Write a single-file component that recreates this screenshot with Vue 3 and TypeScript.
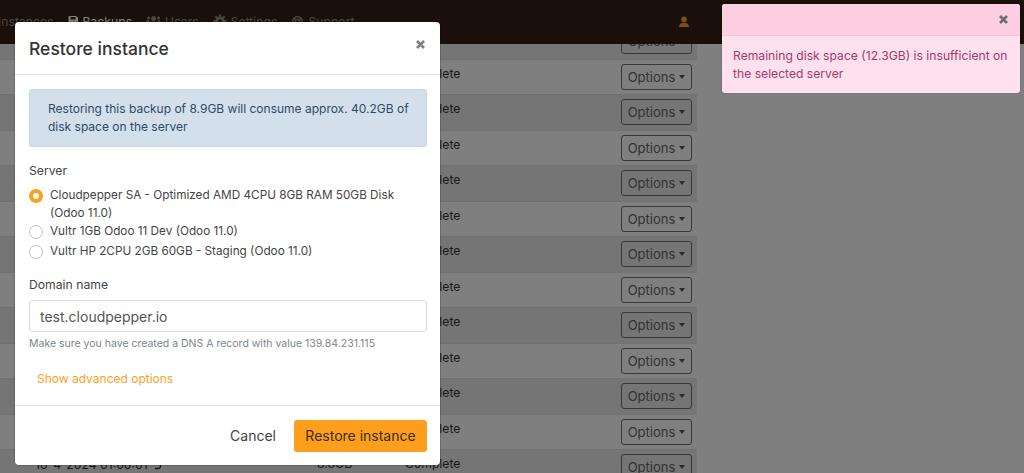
<script setup lang="ts">
import { ref } from 'vue'

const domain = ref('test.cloudpepper.io')
const server = ref('sa')

const servers = [
  { id: 'sa', label: 'Cloudpepper SA - Optimized AMD 4CPU 8GB RAM 50GB Disk (Odoo 11.0)' },
  { id: 'dev', label: 'Vultr 1GB Odoo 11 Dev (Odoo 11.0)' },
  { id: 'hp', label: 'Vultr HP 2CPU 2GB 60GB - Staging (Odoo 11.0)' }
]

const rows = Array.from({ length: 13 }, (_, i) => ({
  id: i,
  date: '10-4-2024 01:00:01',
  size: '8.8GB',
  status: 'Complete'
}))
</script>

<template>
  <div class="page">
    <nav class="navbar">
      <a class="nav-link">Instances</a>
      <a class="nav-link active">
        <svg width="11" height="12" viewBox="0 0 11 12">
          <path d="M1.500 1h6.500l2 2v7a1 1 0 0 1-1 1h-7.500a1 1 0 0 1-1-1v-8a1 1 0 0 1 1-1z" fill="currentColor" />
          <rect x="2.500" y="2" width="5" height="2.500" fill="#341e14" />
          <circle cx="5.500" cy="8" r="1.500" fill="#341e14" />
        </svg>
        Backups
      </a>
      <a class="nav-link">
        <svg width="15" height="12" viewBox="0 0 15 12">
          <g fill="currentColor">
            <circle cx="7.500" cy="3.500" r="2.500" />
            <path d="M3.500 11c0-3 1.500-4.500 4-4.500s4 1.500 4 4.500z" />
            <circle cx="2.500" cy="3" r="1.500" />
            <circle cx="12.500" cy="3" r="1.500" />
            <path d="M0 8c0-2 1-3 2.500-3l1 .5-1 2.500z" />
            <path d="M15 8c0-2-1-3-2.500-3l-1 .5 1 2.500z" />
          </g>
        </svg>
        Users
      </a>
      <a class="nav-link">
        <svg width="14" height="14" viewBox="0 0 14 14">
          <path d="M7 0.500v13M0.500 7h13M2.400 2.400l9.200 9.200M11.600 2.400l-9.200 9.200" stroke="currentColor" stroke-width="2" />
          <circle cx="7" cy="7" r="4.500" fill="currentColor" />
          <circle cx="7" cy="7" r="1.800" fill="#341e14" />
        </svg>
        Settings
      </a>
      <a class="nav-link">
        <svg width="13" height="13" viewBox="0 0 13 13">
          <circle cx="6.500" cy="6.500" r="4.800" fill="none" stroke="currentColor" stroke-width="1.500" />
          <circle cx="6.500" cy="6.500" r="2.200" fill="none" stroke="currentColor" stroke-width="1.300" />
          <path d="M3 3l2 2M10 3l-2 2M3 10l2-2M10 10l-2-2" stroke="currentColor" stroke-width="1.500" />
        </svg>
        Support
      </a>
      <svg class="user" width="12" height="12" viewBox="0 0 12 12">
        <circle cx="6" cy="3.400" r="2.800" fill="#fd9f1c" />
        <path d="M1 11c0-3 2-4.200 5-4.200s5 1.200 5 4.200z" fill="#fd9f1c" />
      </svg>
    </nav>
    <div class="content">
      <div class="table">
        <div v-for="row in rows" :key="row.id" class="row">
          <span class="date">
            {{ row.date }}
            <svg width="9" height="11" viewBox="0 0 9 11">
              <path d="M1 1.500h5a2.500 3 0 0 1 1.500 2.500v3a2.500 2.500 0 0 1-2.500 2.500h-3" fill="none" stroke="#333" stroke-width="1.300" />
            </svg>
          </span>
          <span class="size">{{ row.size }}</span>
          <span class="status">{{ row.status }}</span>
          <button class="options">Options<i class="caret"></i></button>
        </div>
      </div>
    </div>

    <div class="backdrop"></div>

    <div class="modal">
      <header class="modal-header">
        <h2>Restore instance</h2>
        <svg class="close" width="9" height="9" viewBox="0 0 9 9"><path d="M1 1l7 7M8 1l-7 7" /></svg>
      </header>
      <div class="modal-body">
        <div class="alert">Restoring this backup of 8.9GB will consume approx. 40.2GB of disk space on the server</div>
        <div class="label">Server</div>
        <label v-for="s in servers" :key="s.id" class="radio">
          <span class="dot" :class="{ on: server === s.id }"></span>
          <span>{{ s.label }}</span>
        </label>
        <div class="label domain">Domain name</div>
        <input v-model="domain" class="input" />
        <div class="help">Make sure you have created a DNS A record with value 139.84.231.115</div>
        <a class="advanced">Show advanced options</a>
      </div>
      <footer class="modal-footer">
        <button class="cancel">Cancel</button>
        <button class="restore">Restore instance</button>
      </footer>
    </div>

    <div class="toast">
      <div class="toast-head">
        <svg class="close dark" width="9" height="9" viewBox="0 0 9 9"><path d="M1 1l7 7M8 1l-7 7" /></svg>
      </div>
      <div class="toast-body">Remaining disk space (12.3GB) is insufficient on the selected server</div>
    </div>
  </div>
</template>

<style>
html, body { margin: 0; background: #fff; }
</style>

<style scoped>
.page {
  position: relative;
  width: 1024px;
  height: 473px;
  overflow: hidden;
  font-family: Inter, "Noto Sans", sans-serif;
  font-size: 12.2px;
  color: #333;
  background: #fff;
}
.navbar {
  height: 44px;
  background: #341e14;
  display: flex;
  align-items: flex-start;
  gap: 14px;
  padding: 13px 0 0 0;
  box-sizing: border-box;
  color: #8f8f8f;
  position: relative;
  z-index: 1;
}
.nav-link { display: inline-flex; align-items: center; gap: 4px; height: 16px; }
.nav-link:first-child { margin-left: -2px; }
.nav-link.active { color: #fff; }
.user { position: absolute; left: 678px; top: 16px; }
.content { height: 429px; overflow: hidden; }
.table { width: 697px; margin-top: -20px; }
.row {
  height: 35.5px;
  box-sizing: border-box;
  border-bottom: 1px solid #e2e2e2;
  display: flex;
  align-items: flex-start;
}
.row:nth-child(odd) { background: #eaeaea; }
.date {
  width: 317px;
  padding: 6px 0 0 35px;
  box-sizing: border-box;
  display: inline-flex;
  align-items: center;
  gap: 5px;
  height: 22px;
}
.size { width: 88px; padding-top: 6px; }
.status { width: 216px; padding-top: 6px; }
.options {
  width: 71px;
  height: 26px;
  margin-top: 4px;
  padding: 0;
  border: 1px solid #707070;
  border-radius: 3px;
  background: transparent;
  font: inherit;
  font-size: 13px;
  color: #666;
  display: inline-flex;
  align-items: center;
  justify-content: center;
  gap: 4px;
}
.caret {
  width: 0;
  height: 0;
  border: 3px solid transparent;
  border-top: 4px solid #555;
  border-bottom: 0;
}
.backdrop { position: absolute; inset: 0; background: rgba(0, 0, 0, 0.5); z-index: 2; }
.modal {
  position: absolute;
  left: 15px;
  top: 22px;
  width: 425px;
  height: 443px;
  background: #fff;
  border-radius: 4px;
  box-shadow: 0 0 0 1px rgba(0, 0, 0, 0.15);
  z-index: 3;
  display: flex;
  flex-direction: column;
}
.modal-header {
  height: 53px;
  box-sizing: border-box;
  border-bottom: 1px solid #e6e9ec;
  padding: 0 15px 0 14px;
  display: flex;
  align-items: center;
  justify-content: space-between;
}
.modal-header h2 { margin: 0; font-size: 17.500px; font-weight: 500; color: #333; }
.close { fill: none; stroke: #808080; stroke-width: 2.700; margin-top: -7px; }
.modal-body { flex: 1; padding: 14px 13px 0 14px; }
.alert {
  height: 58px;
  box-sizing: border-box;
  padding: 10px 14px 10px 18px;
  background: #d3e0ec;
  border: 1px solid #c6d7e6;
  border-radius: 3px;
  line-height: 18px;
  font-size: 12px;
  color: #2f4a66;
}
.label { margin-top: 15px; margin-bottom: 6px; line-height: 18px; color: #444; }
.radio { display: flex; gap: 7px; line-height: 18px; color: #444; font-size: 11.750px; }
.radio:last-of-type { margin-top: 2px; }
.dot {
  flex: none;
  box-sizing: border-box;
  width: 14px;
  height: 14px;
  margin-top: 3px;
  border-radius: 50%;
  border: 1px solid #b5bec6;
  background: #fff;
}
.dot.on { border: 4px solid #fd9f1c; }
.domain { margin-top: 16px; margin-bottom: 6px; }
.input {
  display: block;
  width: 398px;
  height: 32px;
  box-sizing: border-box;
  padding: 0 10px;
  border: 1px solid #d5dadf;
  border-radius: 3px;
  font: inherit;
  font-size: 14px;
  color: #555;
}
.help { margin-top: 4px; font-size: 10.500px; line-height: 16px; color: #7d858c; }
.advanced { display: block; margin: 18px 0 0 8px; color: #fd9f1c; line-height: 18px; font-size: 12px; }
.modal-footer {
  height: 60px;
  box-sizing: border-box;
  border-top: 1px solid #e6e9ec;
  display: flex;
  justify-content: flex-end;
  align-items: center;
  gap: 18px;
  padding: 0 13px;
}
.cancel { background: none; border: 0; font: inherit; font-size: 14px; color: #444; padding: 0; }
.restore {
  width: 133px;
  height: 32px;
  border: 0;
  border-radius: 3px;
  background: #fd9f1c;
  font: inherit;
  font-size: 14px;
  color: #3b2d15;
}
.toast {
  position: absolute;
  left: 722px;
  top: 4px;
  width: 298px;
  height: 89px;
  border-radius: 3px;
  z-index: 3;
  overflow: hidden;
  background: #ffe1ee;
  box-shadow: 0 0 2px rgba(0, 0, 0, 0.2);
}
.toast-head {
  height: 32px;
  background: #fdcfe0;
  border-bottom: 1px solid #fbc4d8;
  display: flex;
  justify-content: flex-end;
  align-items: center;
  padding-right: 12px;
  box-sizing: border-box;
}
.close.dark { stroke: #6f6f6f; margin-top: 0; }
.toast-body { padding: 11px 4px 11px 11px; line-height: 18px; color: #a8386a; font-size: 12.150px; }
</style>
